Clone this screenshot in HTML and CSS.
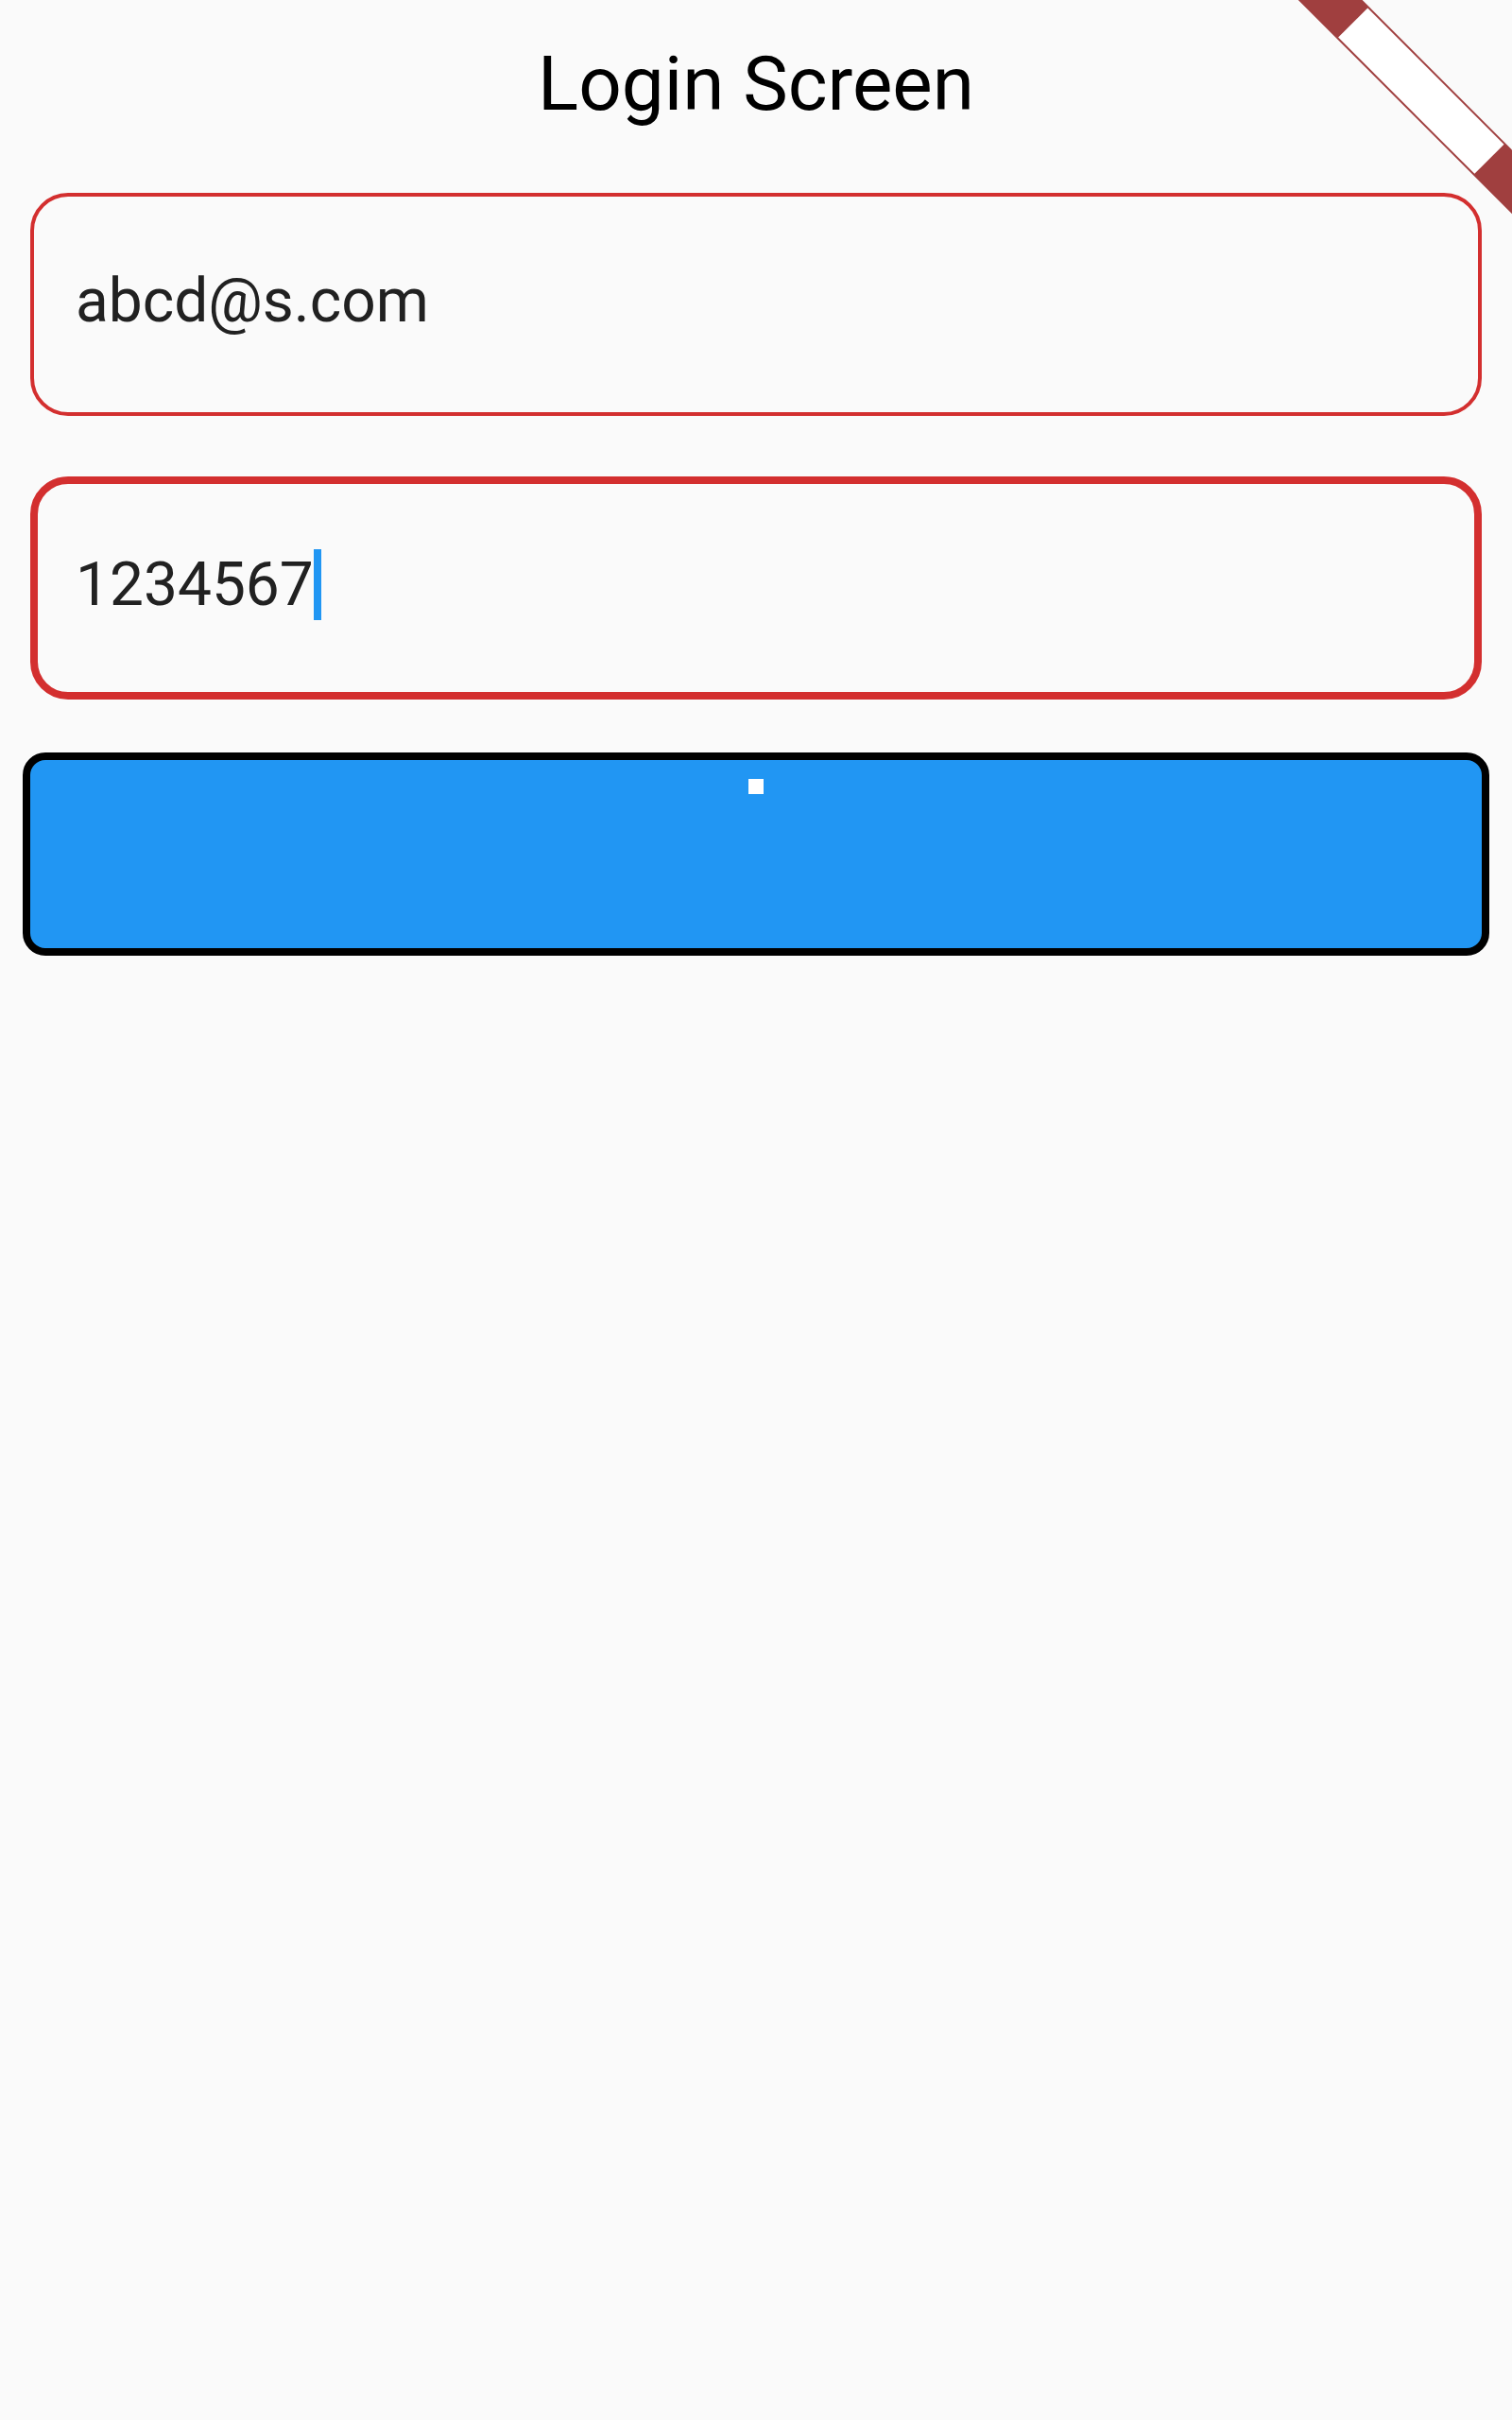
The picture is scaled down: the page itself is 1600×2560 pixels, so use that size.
FILE: index.html
```html
<!DOCTYPE html>
<html lang="en">
<head>
<meta charset="utf-8">
<title>Login Screen</title>
<link rel="stylesheet" href="styles.css">
</head>
<body>
<div class="screen">
  <h1 class="title">Login Screen</h1>
  <form class="form">
    <div class="field field-email">
      <span class="value">abcd@s.com</span>
    </div>
    <div class="field field-password">
      <span class="value">1234567</span><span class="caret"></span>
    </div>
    <div class="submit" role="button">
      <span class="dot"></span>
    </div>
  </form>
  <div class="banner" aria-hidden="true">
    <div class="ribbon"><div class="ribbon-label"></div></div>
  </div>
</div>
</body>
</html>
```
FILE: styles.css
```css
html, body {
  margin: 0;
  padding: 0;
  background: #fafafa;
}

.screen {
  position: relative;
  width: 1600px;
  height: 2560px;
  overflow: hidden;
  background: #fafafa;
  font-family: Roboto, "Liberation Sans", sans-serif;
}

.title {
  margin: 0;
  padding-top: 42px;
  font-size: 80px;
  font-weight: 400;
  line-height: 94px;
  height: 94px;
  text-align: center;
  color: #000;
}

.form {
  display: flex;
  flex-direction: column;
  margin: 0;
  padding-top: 68px;
}

.field {
  box-sizing: border-box;
  height: 236px;
  margin: 0 32px;
  border-style: solid;
  border-color: #d32f2f;
  border-radius: 40px;
  display: flex;
  align-items: flex-start;
  font-size: 64px;
  line-height: 75px;
  color: #212121;
}

.field-email {
  border-width: 4px;
  padding: 72.6px 0 0 44px;
}

.field-password {
  border-width: 8px;
  padding: 68.6px 0 0 40px;
  margin-top: 64px;
}

.value {
  white-space: pre;
}

.caret {
  display: inline-block;
  width: 8px;
  height: 75px;
  background: #2196f3;
  margin-left: 0.5px;
}

.submit {
  box-sizing: border-box;
  height: 215px;
  margin: 56px 24px 0;
  border: 8px solid #000;
  border-radius: 24px;
  background: #2196f3;
  display: flex;
  justify-content: center;
  align-items: flex-start;
  padding-top: 20px;
}

.dot {
  display: block;
  width: 16px;
  height: 16px;
  background: #fff;
}

.banner {
  position: absolute;
  top: 0;
  right: 0;
  width: 0;
  height: 0;
  transform: rotate(45deg);
  transform-origin: 0 0;
}

.ribbon {
  position: absolute;
  left: -160px;
  top: 112px;
  width: 320px;
  height: 48px;
  background: #a03f3f;
  display: flex;
  align-items: center;
  justify-content: center;
}

.ribbon-label {
  width: 204px;
  height: 44px;
  background: #fff;
}
```
